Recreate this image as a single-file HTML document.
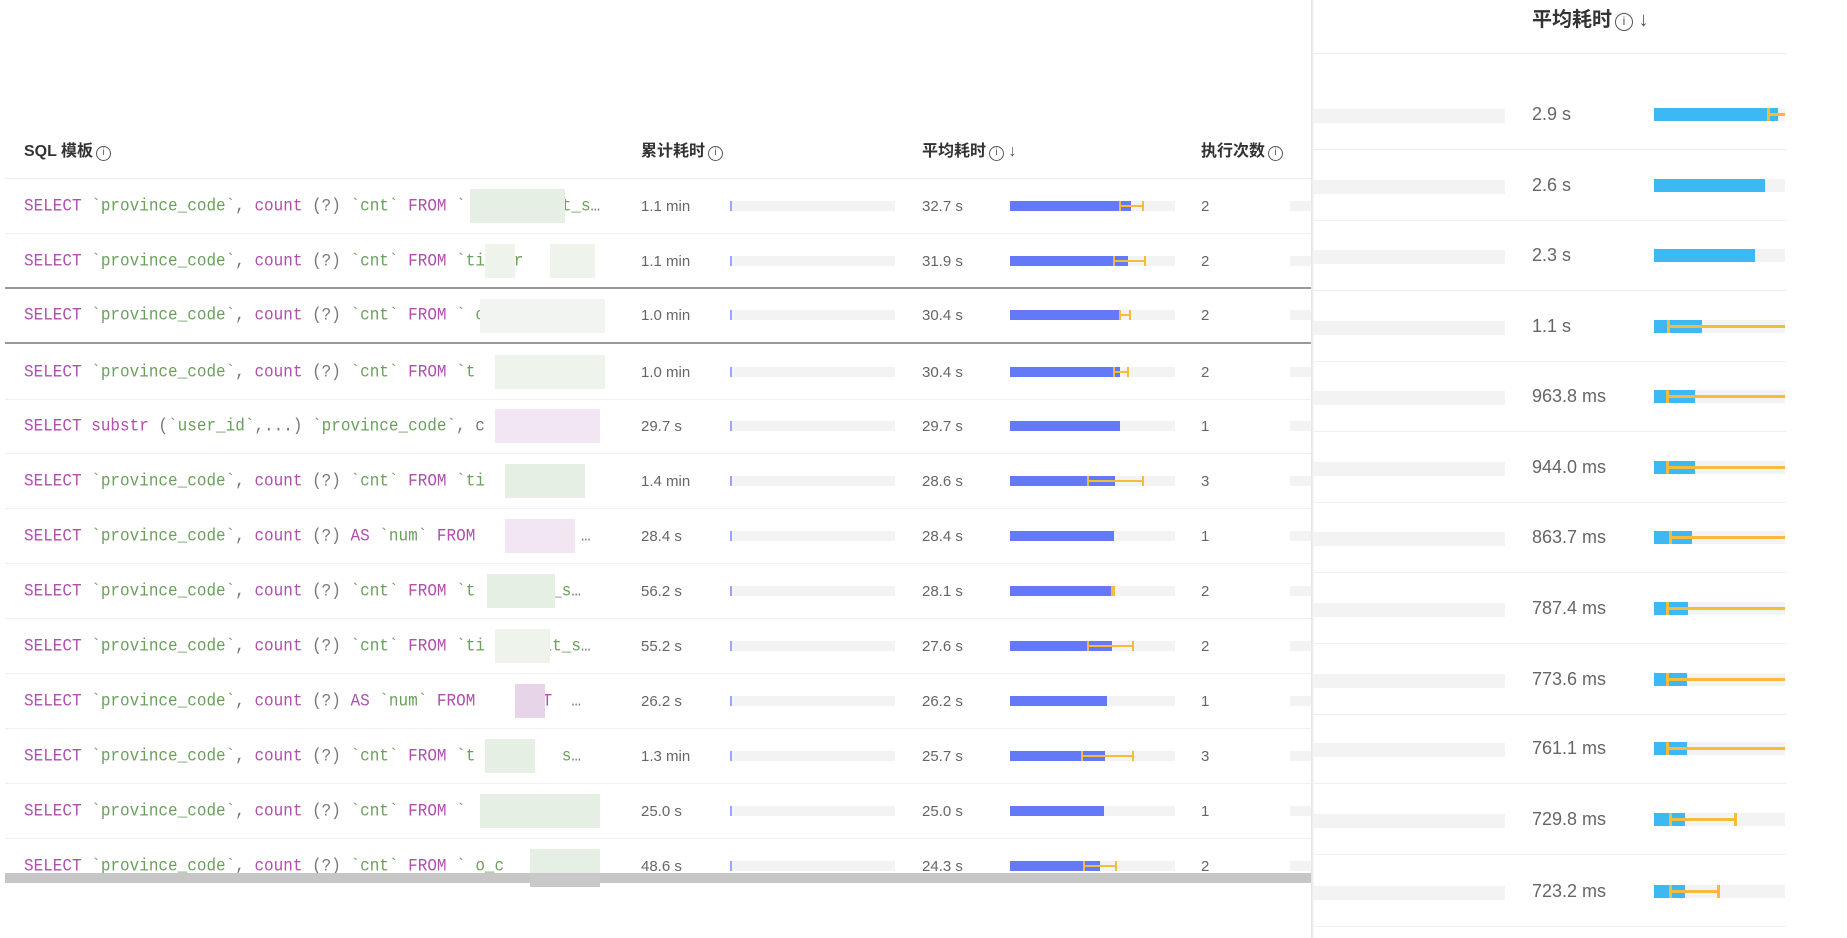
<!DOCTYPE html>
<html><head><meta charset="utf-8"><style>
*{margin:0;padding:0;box-sizing:border-box}
body{width:1847px;height:938px;background:#fff;position:relative;overflow:hidden;font-family:"Liberation Sans","Noto Sans CJK SC",sans-serif}
.a{position:absolute}
.hd{position:absolute;font-size:16px;font-weight:bold;color:#333;line-height:20px}
.ic{display:inline-block;width:15px;height:15px;border:1.3px solid #555;border-radius:50%;font-size:10px;line-height:12px;text-align:center;font-weight:normal;vertical-align:1px;margin-left:3px;color:#555}
.row{position:absolute;left:5px;width:1306px;height:55px;border-bottom:1px solid #f0f0f0}
.sql{position:absolute;left:19px;top:17px;font-family:"Liberation Mono",monospace;font-size:16px;line-height:20px;color:#777;white-space:pre;transform:scaleY(1.12);transform-origin:left center}
.k{color:#b14eae}.s{color:#6ba05c}
.v{position:absolute;top:18px;font-size:15px;color:#666;line-height:20px}
.tr{position:absolute;height:10px;background:#f3f3f3;top:22px}
.bb{position:absolute;left:0;top:0;height:10px;background:#6479f8}
.tk{position:absolute;left:0;top:0;width:2px;height:10px;background:#9aa6fb}
.e{position:absolute;top:4px;height:2px;background:#f6bb3a}
.e:before,.e:after{content:"";position:absolute;top:-4px;width:2px;height:10px;background:#f6bb3a}
.e:before{left:0}.e:after{right:0}
.m{position:absolute;top:10px;height:34px;background:#e6efe4}
.rr{position:absolute;left:1314px;width:472px;height:71px;border-bottom:1px solid #eee}
.rv{position:absolute;left:218px;top:24px;font-size:18px;color:#666;line-height:22px}
.rt{position:absolute;left:340px;top:29px;width:131px;height:13px;background:#f3f3f3}
.rb{position:absolute;left:0;top:0;height:13px;background:#3cb8f2}
.re{position:absolute;top:5px;height:3px;background:#f6bb3a}
.re:before{content:"";position:absolute;left:0;top:-5px;width:3px;height:13px;background:#f6bb3a}
.re.c:after{content:"";position:absolute;right:0;top:-5px;width:3px;height:13px;background:#f6bb3a}
.lt{position:absolute;left:0;top:30px;width:191px;height:14px;background:#f3f3f3}
</style></head><body>

<!-- left panel -->
<div class="hd" style="left:24px;top:142px">SQL 模板<span class="ic">i</span></div>
<div class="hd" style="left:641px;top:142px">累计耗时<span class="ic">i</span></div>
<div class="hd" style="left:922px;top:142px">平均耗时<span class="ic">i</span> <span style="font-weight:normal;color:#555">↓</span></div>
<div class="hd" style="left:1201px;top:142px">执行次数<span class="ic">i</span></div>
<div class="a" style="left:5px;top:178px;width:1306px;height:1px;background:#eee"></div>

<div class="row" style="top:179px"><div class="sql"><span class="k">SELECT</span> <span class="s">`province_code`</span>, <span class="k">count</span> (?) <span class="s">`cnt`</span> <span class="k">FROM</span> <span class="s">`         it_s</span>…</div><div class="m" style="left:465px;width:95px"></div><div class="v" style="left:636px">1.1 min</div><div class="tr" style="left:725px;width:165px"><div class="tk"></div></div><div class="v" style="left:917px">32.7 s</div><div class="tr" style="left:1005px;width:165px"><div class="bb" style="width:121px"></div><div class="e" style="left:109px;width:25px"></div></div><div class="v" style="left:1196px">2</div><div class="tr" style="left:1285px;width:21px"></div></div>

<div class="row" style="top:234px"><div class="sql"><span class="k">SELECT</span> <span class="s">`province_code`</span>, <span class="k">count</span> (?) <span class="s">`cnt`</span> <span class="k">FROM</span> <span class="s">`ti  cr     s</span>…</div><div class="m" style="left:480px;width:30px;background:#eef3ec"></div><div class="m" style="left:545px;width:45px;background:#eef3ec"></div><div class="v" style="left:636px">1.1 min</div><div class="tr" style="left:725px;width:165px"><div class="tk"></div></div><div class="v" style="left:917px">31.9 s</div><div class="tr" style="left:1005px;width:165px"><div class="bb" style="width:118px"></div><div class="e" style="left:103px;width:33px"></div></div><div class="v" style="left:1196px">2</div><div class="tr" style="left:1285px;width:21px"></div></div>

<div class="row" style="top:288px;border-top:2px solid #999;border-bottom:2px solid #999;height:57px;top:287px"><div class="sql" style="top:16px"><span class="k">SELECT</span> <span class="s">`province_code`</span>, <span class="k">count</span> (?) <span class="s">`cnt`</span> <span class="k">FROM</span> <span class="s">` o_c      </span>…</div><div class="m" style="left:475px;width:125px;background:#f2f4f1"></div><div class="v" style="left:636px;top:17px">1.0 min</div><div class="tr" style="left:725px;width:165px;top:21px"><div class="tk"></div></div><div class="v" style="left:917px;top:17px">30.4 s</div><div class="tr" style="left:1005px;width:165px;top:21px"><div class="bb" style="width:110px"></div><div class="e" style="left:109px;width:12px"></div></div><div class="v" style="left:1196px;top:17px">2</div><div class="tr" style="left:1285px;width:21px;top:21px"></div></div>

<div class="row" style="top:345px"><div class="sql"><span class="k">SELECT</span> <span class="s">`province_code`</span>, <span class="k">count</span> (?) <span class="s">`cnt`</span> <span class="k">FROM</span> <span class="s">`t</span></div><div class="m" style="left:490px;width:110px;background:#eef3ec"></div><div class="v" style="left:636px">1.0 min</div><div class="tr" style="left:725px;width:165px"><div class="tk"></div></div><div class="v" style="left:917px">30.4 s</div><div class="tr" style="left:1005px;width:165px"><div class="bb" style="width:110px"></div><div class="e" style="left:103px;width:16px"></div></div><div class="v" style="left:1196px">2</div><div class="tr" style="left:1285px;width:21px"></div></div>

<div class="row" style="top:399px"><div class="sql"><span class="k">SELECT</span> <span class="k">substr</span> (<span class="s">`user_id`</span>,...) <span class="s">`province_code`</span>, c         …</div><div class="m" style="left:490px;width:105px;background:#f1e6f1"></div><div class="v" style="left:636px">29.7 s</div><div class="tr" style="left:725px;width:165px"><div class="tk"></div></div><div class="v" style="left:917px">29.7 s</div><div class="tr" style="left:1005px;width:165px"><div class="bb" style="width:110px"></div></div><div class="v" style="left:1196px">1</div><div class="tr" style="left:1285px;width:21px"></div></div>

<div class="row" style="top:454px"><div class="sql"><span class="k">SELECT</span> <span class="s">`province_code`</span>, <span class="k">count</span> (?) <span class="s">`cnt`</span> <span class="k">FROM</span> <span class="s">`ti       .s</span>…</div><div class="m" style="left:500px;width:80px"></div><div class="v" style="left:636px">1.4 min</div><div class="tr" style="left:725px;width:165px"><div class="tk"></div></div><div class="v" style="left:917px">28.6 s</div><div class="tr" style="left:1005px;width:165px"><div class="bb" style="width:105px"></div><div class="e" style="left:77px;width:57px"></div></div><div class="v" style="left:1196px">3</div><div class="tr" style="left:1285px;width:21px"></div></div>

<div class="row" style="top:509px"><div class="sql"><span class="k">SELECT</span> <span class="s">`province_code`</span>, <span class="k">count</span> (?) <span class="k">AS</span> <span class="s">`num`</span> <span class="k">FROM</span>         * …</div><div class="m" style="left:500px;width:70px;background:#f1e6f1"></div><div class="v" style="left:636px">28.4 s</div><div class="tr" style="left:725px;width:165px"><div class="tk"></div></div><div class="v" style="left:917px">28.4 s</div><div class="tr" style="left:1005px;width:165px"><div class="bb" style="width:104px"></div></div><div class="v" style="left:1196px">1</div><div class="tr" style="left:1285px;width:21px"></div></div>

<div class="row" style="top:564px"><div class="sql"><span class="k">SELECT</span> <span class="s">`province_code`</span>, <span class="k">count</span> (?) <span class="s">`cnt`</span> <span class="k">FROM</span> <span class="s">`t     dit_s</span>…</div><div class="m" style="left:482px;width:68px"></div><div class="v" style="left:636px">56.2 s</div><div class="tr" style="left:725px;width:165px"><div class="tk"></div></div><div class="v" style="left:917px">28.1 s</div><div class="tr" style="left:1005px;width:165px"><div class="bb" style="width:103px"></div><div class="e" style="left:101px;width:4px"></div></div><div class="v" style="left:1196px">2</div><div class="tr" style="left:1285px;width:21px"></div></div>

<div class="row" style="top:619px"><div class="sql"><span class="k">SELECT</span> <span class="s">`province_code`</span>, <span class="k">count</span> (?) <span class="s">`cnt`</span> <span class="k">FROM</span> <span class="s">`ti    edit_s</span>…</div><div class="m" style="left:490px;width:55px;background:#eef3ec"></div><div class="v" style="left:636px">55.2 s</div><div class="tr" style="left:725px;width:165px"><div class="tk"></div></div><div class="v" style="left:917px">27.6 s</div><div class="tr" style="left:1005px;width:165px"><div class="bb" style="width:102px"></div><div class="e" style="left:77px;width:47px"></div></div><div class="v" style="left:1196px">2</div><div class="tr" style="left:1285px;width:21px"></div></div>

<div class="row" style="top:674px"><div class="sql"><span class="k">SELECT</span> <span class="s">`province_code`</span>, <span class="k">count</span> (?) <span class="k">AS</span> <span class="s">`num`</span> <span class="k">FROM</span>     <span class="k">ECT</span>  …</div><div class="m" style="left:510px;width:30px;background:#e8d4e8"></div><div class="v" style="left:636px">26.2 s</div><div class="tr" style="left:725px;width:165px"><div class="tk"></div></div><div class="v" style="left:917px">26.2 s</div><div class="tr" style="left:1005px;width:165px"><div class="bb" style="width:97px"></div></div><div class="v" style="left:1196px">1</div><div class="tr" style="left:1285px;width:21px"></div></div>

<div class="row" style="top:729px"><div class="sql"><span class="k">SELECT</span> <span class="s">`province_code`</span>, <span class="k">count</span> (?) <span class="s">`cnt`</span> <span class="k">FROM</span> <span class="s">`t    ed   s</span>…</div><div class="m" style="left:480px;width:50px"></div><div class="v" style="left:636px">1.3 min</div><div class="tr" style="left:725px;width:165px"><div class="tk"></div></div><div class="v" style="left:917px">25.7 s</div><div class="tr" style="left:1005px;width:165px"><div class="bb" style="width:95px"></div><div class="e" style="left:71px;width:53px"></div></div><div class="v" style="left:1196px">3</div><div class="tr" style="left:1285px;width:21px"></div></div>

<div class="row" style="top:784px"><div class="sql"><span class="k">SELECT</span> <span class="s">`province_code`</span>, <span class="k">count</span> (?) <span class="s">`cnt`</span> <span class="k">FROM</span> <span class="s">`</span>            …</div><div class="m" style="left:475px;width:120px"></div><div class="v" style="left:636px">25.0 s</div><div class="tr" style="left:725px;width:165px"><div class="tk"></div></div><div class="v" style="left:917px">25.0 s</div><div class="tr" style="left:1005px;width:165px"><div class="bb" style="width:94px"></div></div><div class="v" style="left:1196px">1</div><div class="tr" style="left:1285px;width:21px"></div></div>

<div class="row" style="top:839px;border-bottom:none"><div class="sql"><span class="k">SELECT</span> <span class="s">`province_code`</span>, <span class="k">count</span> (?) <span class="s">`cnt`</span> <span class="k">FROM</span> <span class="s">` o_c      </span>…</div><div class="m" style="left:525px;width:70px"></div><div class="v" style="left:636px">48.6 s</div><div class="tr" style="left:725px;width:165px"><div class="tk"></div></div><div class="v" style="left:917px">24.3 s</div><div class="tr" style="left:1005px;width:165px"><div class="bb" style="width:90px"></div><div class="e" style="left:73px;width:34px"></div></div><div class="v" style="left:1196px">2</div><div class="tr" style="left:1285px;width:21px"></div></div>

<div class="a" style="left:5px;top:873px;width:1306px;height:10px;background:#c6c6c6"></div>
<div class="a" style="left:530px;top:873px;width:70px;height:14px;background:#c9c9c9"></div>

<!-- right panel -->
<div class="a" style="left:1311px;top:0;width:3px;height:938px;background:linear-gradient(90deg,#e4e4e4,#f7f7f7)"></div>
<div class="hd" style="left:1532px;top:7px;font-size:20px;line-height:26px">平均耗时<span class="ic" style="width:18px;height:18px;font-size:12px;line-height:15px">i</span> <span style="font-weight:normal;color:#555">↓</span></div>
<div class="a" style="left:1314px;top:53px;width:472px;height:1px;background:#eee"></div>

<div class="rr" style="top:79px"><div class="lt"></div><div class="rv">2.9 s</div><div class="rt"><div class="rb" style="width:124px"></div><div class="re" style="left:113px;width:18px"></div></div></div>
<div class="rr" style="top:150px"><div class="lt"></div><div class="rv">2.6 s</div><div class="rt"><div class="rb" style="width:111px"></div></div></div>
<div class="rr" style="top:220px"><div class="lt"></div><div class="rv">2.3 s</div><div class="rt"><div class="rb" style="width:101px"></div></div></div>
<div class="rr" style="top:291px"><div class="lt"></div><div class="rv">1.1 s</div><div class="rt"><div class="rb" style="width:48px"></div><div class="re" style="left:13px;width:118px"></div></div></div>
<div class="rr" style="top:361px"><div class="lt"></div><div class="rv">963.8 ms</div><div class="rt"><div class="rb" style="width:41px"></div><div class="re" style="left:12px;width:119px"></div></div></div>
<div class="rr" style="top:432px"><div class="lt"></div><div class="rv">944.0 ms</div><div class="rt"><div class="rb" style="width:41px"></div><div class="re" style="left:12px;width:119px"></div></div></div>
<div class="rr" style="top:502px"><div class="lt"></div><div class="rv">863.7 ms</div><div class="rt"><div class="rb" style="width:38px"></div><div class="re" style="left:15px;width:116px"></div></div></div>
<div class="rr" style="top:573px"><div class="lt"></div><div class="rv">787.4 ms</div><div class="rt"><div class="rb" style="width:34px"></div><div class="re" style="left:12px;width:119px"></div></div></div>
<div class="rr" style="top:644px"><div class="lt"></div><div class="rv">773.6 ms</div><div class="rt"><div class="rb" style="width:33px"></div><div class="re" style="left:12px;width:119px"></div></div></div>
<div class="rr" style="top:713px"><div class="lt"></div><div class="rv">761.1 ms</div><div class="rt"><div class="rb" style="width:33px"></div><div class="re" style="left:12px;width:119px"></div></div></div>
<div class="rr" style="top:784px"><div class="lt"></div><div class="rv">729.8 ms</div><div class="rt"><div class="rb" style="width:31px"></div><div class="re c" style="left:15px;width:68px"></div></div></div>
<div class="rr" style="top:856px"><div class="lt"></div><div class="rv">723.2 ms</div><div class="rt"><div class="rb" style="width:31px"></div><div class="re c" style="left:15px;width:51px"></div></div></div>

</body></html>
